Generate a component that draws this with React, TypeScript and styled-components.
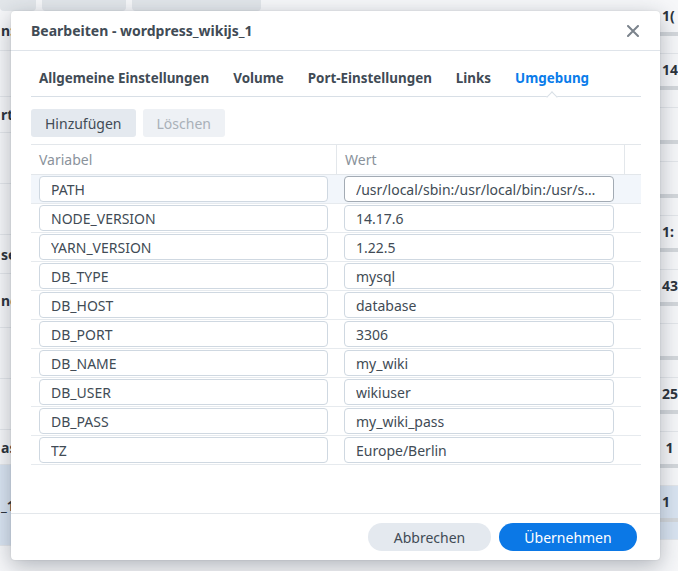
import * as React from 'react';
import styled, { createGlobalStyle } from 'styled-components';

const envVars: [string, string][] = [
    ['PATH', '/usr/local/sbin:/usr/local/bin:/usr/sbin:/usr/bin:/sbin:/bin'],
    ['NODE_VERSION', '14.17.6'],
    ['YARN_VERSION', '1.22.5'],
    ['DB_TYPE', 'mysql'],
    ['DB_HOST', 'database'],
    ['DB_PORT', '3306'],
    ['DB_NAME', 'my_wiki'],
    ['DB_USER', 'wikiuser'],
    ['DB_PASS', 'my_wiki_pass'],
    ['TZ', 'Europe/Berlin'],
];

const tabs = ['Allgemeine Einstellungen', 'Volume', 'Port-Einstellungen', 'Links', 'Umgebung'];

// page behind the dialog, only its edges are visible
const leftRows: { h: number; text: string; selected?: boolean }[] = [
    { h: 39, text: 'n:l' },
    { h: 45, text: '' },
    { h: 35, text: 'rt' },
    { h: 50, text: '' },
    { h: 50, text: '' },
    { h: 38, text: 'se' },
    { h: 53, text: 'nc' },
    { h: 50, text: '' },
    { h: 50, text: '' },
    { h: 34, text: 'as' },
    { h: 80, text: '_1', selected: true },
];

const rightRows: { text: string; selected?: boolean }[] = [
    { text: '1(' },
    { text: '14' },
    { text: '' },
    { text: '' },
    { text: '1:' },
    { text: '43' },
    { text: '' },
    { text: '25' },
    { text: ' 1' },
    { text: '1', selected: true },
];

export default function App() {
    return (
        <>
            <GlobalStyle />
            <Backdrop>
                <LeftPane>
                    <ChipBar>
                        <Chip w={36} />
                        <Chip w={84} />
                        <Chip w={129} />
                    </ChipBar>
                    {leftRows.map((row, i) => (
                        <LeftRow key={i} h={row.h} selected={row.selected}>
                            <LeftLabel>{row.text}</LeftLabel>
                        </LeftRow>
                    ))}
                </LeftPane>
                <RightPane>
                    {rightRows.map((row, i) => (
                        <RightRow key={i} selected={row.selected}>
                            <RightText>{row.text}</RightText>
                            <Meter />
                        </RightRow>
                    ))}
                </RightPane>

                <Dialog>
                    <Header>
                        <DialogTitle>Bearbeiten - wordpress_wikijs_1</DialogTitle>
                        <CloseButton aria-label="Schließen">
                            <svg width="12" height="12" viewBox="0 0 12 12">
                                <path d="M1 1L11 11M11 1L1 11" stroke="#7b838c" strokeWidth="2" strokeLinecap="round" />
                            </svg>
                        </CloseButton>
                    </Header>
                    <Body>
                        <TabBar>
                            {tabs.map((t) => (
                                <Tab key={t} active={t === 'Umgebung'}>{t}</Tab>
                            ))}
                        </TabBar>
                        <Toolbar>
                            <ToolButton>Hinzufügen</ToolButton>
                            <ToolButton disabled>Löschen</ToolButton>
                        </Toolbar>
                        <Table>
                            <HeadRow>
                                <HeadCell>Variabel</HeadCell>
                                <HeadCell divider>Wert</HeadCell>
                                <HeadCell divider />
                            </HeadRow>
                            {envVars.map(([name, value], i) => (
                                <Row key={name} selected={i === 0}>
                                    <Cell>
                                        <Field readOnly value={name} />
                                    </Cell>
                                    <Cell right>
                                        <Field readOnly value={value} focused={i === 0} />
                                    </Cell>
                                    <Cell />
                                </Row>
                            ))}
                        </Table>
                    </Body>
                    <Footer>
                        <FooterButton>Abbrechen</FooterButton>
                        <FooterButton primary>Übernehmen</FooterButton>
                    </Footer>
                </Dialog>
            </Backdrop>
        </>
    );
}

const GlobalStyle = createGlobalStyle`
    html, body {
        margin: 0;
        padding: 0;
    }
    body {
        font-family: "Noto Sans", "DejaVu Sans", sans-serif;
        color: #414b55;
    }
`;

const Backdrop = styled.div`
    position: relative;
    width: 678px;
    height: 571px;
    overflow: hidden;
    display: flex;
    background: #f6f7f9;
`;

const LeftPane = styled.div`
    width: 640px;
    display: flex;
    flex-direction: column;
`;

const ChipBar = styled.div`
    display: flex;
    gap: 6px;
    margin-top: -18px;
    height: 29px;
    flex: none;
`;

const Chip = styled.div<{ w: number }>`
    width: ${p => p.w}px;
    background: #e2e6ea;
    border-radius: 4px;
`;

const LeftRow = styled.div<{ h: number; selected?: boolean }>`
    height: ${p => p.h}px;
    flex: none;
    display: flex;
    align-items: center;
    border-bottom: 1px solid #e3e6ea;
    background: ${p => (p.selected ? '#d9e4f1' : 'transparent')};
`;

const LeftLabel = styled.div`
    padding-left: 1px;
    white-space: nowrap;
    font-weight: 700;
    font-size: 14px;
    color: #2c333b;
`;

const RightPane = styled.div`
    flex: 1;
    display: flex;
    flex-direction: column;
`;

const RightRow = styled.div<{ selected?: boolean }>`
    height: 54px;
    flex: none;
    display: flex;
    flex-direction: column;
    padding: 6px 0 0 22px;
    box-sizing: border-box;
    border-bottom: 1px solid #e3e6ea;
    background: ${p => (p.selected ? '#d9e4f1' : 'transparent')};
`;

const RightText = styled.div`
    height: 20px;
    line-height: 20px;
    font-weight: 700;
    font-size: 14px;
    color: #2c333b;
    white-space: pre;
`;

const Meter = styled.div`
    margin: 6px 0 0 -2px;
    height: 4px;
    background: #d3d7db;
`;

const Dialog = styled.div`
    position: absolute;
    left: 11px;
    top: 11px;
    width: 649px;
    height: 549px;
    background: #fff;
    border-radius: 4px;
    box-shadow: 0 6px 22px rgba(30, 40, 55, 0.32), 0 0 2px rgba(0, 0, 0, 0.12);
    display: flex;
    flex-direction: column;
`;

const Header = styled.div`
    height: 39px;
    flex: none;
    display: flex;
    align-items: center;
    justify-content: space-between;
    padding: 0 21px 0 20px;
    border-bottom: 1px solid #dfe4ea;
`;

const DialogTitle = styled.div`
    font-size: 14px;
    font-weight: 700;
    color: #414b55;
`;

const CloseButton = styled.button`
    border: 0;
    padding: 0;
    background: none;
    width: 12px;
    height: 12px;
    display: flex;
`;

const Body = styled.div`
    flex: 1;
    display: flex;
    flex-direction: column;
    padding: 0 19px 0 20px;
`;

const TabBar = styled.div`
    height: 45px;
    flex: none;
    display: flex;
    align-items: flex-end;
    gap: 24px;
    padding-left: 8px;
    border-bottom: 1px solid #d8dfe6;
`;

const Tab = styled.div<{ active?: boolean }>`
    position: relative;
    line-height: 20px;
    padding-bottom: 8px;
    font-size: 13.4px;
    font-weight: 700;
    color: ${p => (p.active ? '#0a7cea' : '#414b55')};
    white-space: nowrap;

    &::after {
        content: '';
        display: ${p => (p.active ? 'block' : 'none')};
        position: absolute;
        left: 50%;
        bottom: -5px;
        width: 7px;
        height: 7px;
        margin-left: -4px;
        background: #fff;
        border-top: 1px solid #d8dfe6;
        border-left: 1px solid #d8dfe6;
        transform: rotate(45deg);
    }
`;

const Toolbar = styled.div`
    display: flex;
    gap: 7px;
    margin-top: 12px;
`;

const ToolButton = styled.button`
    height: 28px;
    padding: 0 14px;
    border: 0;
    border-radius: 3px;
    font: inherit;
    font-size: 14px;
    background: ${p => (p.disabled ? '#eef1f5' : '#e4e9ef')};
    color: ${p => (p.disabled ? '#a9b0b8' : '#414b55')};
`;

const Table = styled.div`
    margin-top: 7px;
    border-top: 1px solid #e3e7eb;
`;

const HeadRow = styled.div`
    display: grid;
    grid-template-columns: 305px 288px 1fr;
    height: 29px;
    border-bottom: 1px solid #e3e7eb;
`;

const HeadCell = styled.div<{ divider?: boolean }>`
    display: flex;
    align-items: center;
    padding-left: 8px;
    font-size: 14px;
    color: #8a929b;
    border-left: ${p => (p.divider ? '1px solid #e3e7eb' : '0')};
`;

const Row = styled.div<{ selected?: boolean }>`
    display: grid;
    grid-template-columns: 305px 288px 1fr;
    height: 28px;
    border-bottom: 1px solid #e6eaee;
    background: ${p => (p.selected ? '#f2f6fb' : '#fff')};
`;

const Cell = styled.div<{ right?: boolean }>`
    display: flex;
    align-items: center;
    padding: ${p => (p.right ? '0 10px 0 8px' : '0 8px')};
`;

const Field = styled.input<{ focused?: boolean }>`
    box-sizing: border-box;
    width: 100%;
    height: 26px;
    padding: 0 11px;
    border: 1px solid ${p => (p.focused ? '#a3abb4' : '#cfd8e1')};
    border-radius: 4px;
    background: #fff;
    font: inherit;
    font-size: 14px;
    color: #414b55;
    text-overflow: ellipsis;
    outline: none;
`;

const Footer = styled.div`
    height: 46px;
    flex: none;
    display: flex;
    align-items: center;
    justify-content: flex-end;
    gap: 8px;
    padding: 0 23px;
    border-top: 1px solid #e3e7eb;
`;

const FooterButton = styled.button<{ primary?: boolean }>`
    height: 28px;
    min-width: ${p => (p.primary ? '138px' : '123px')};
    padding: 0 18px;
    border: 0;
    border-radius: 14px;
    font: inherit;
    font-size: 14px;
    background: ${p => (p.primary ? '#0b78e6' : '#e4e9ef')};
    color: ${p => (p.primary ? '#fff' : '#414b55')};
`;
